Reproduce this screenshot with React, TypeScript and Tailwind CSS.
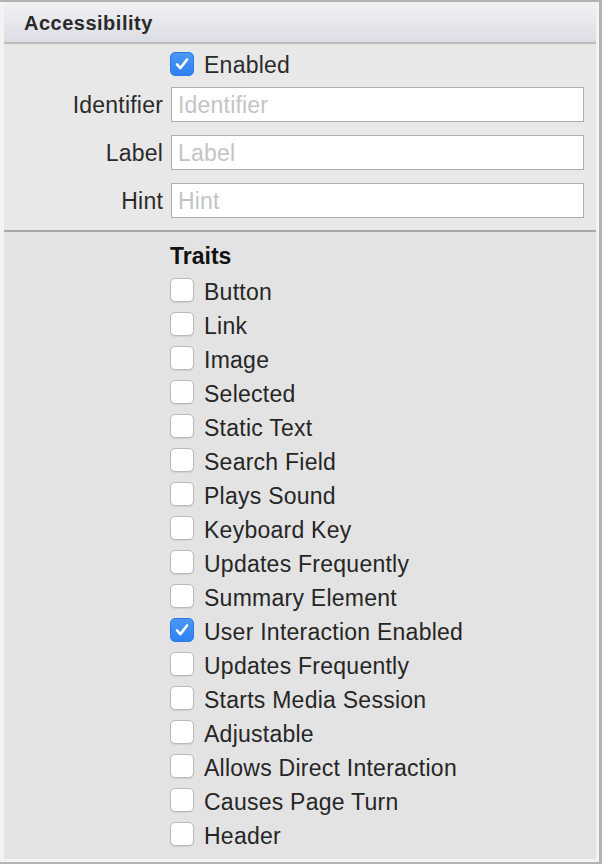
import React from "react";

const font = { fontFamily: '"Liberation Sans", Arial, sans-serif' };

function Box({ checked }: { checked?: boolean }) {
  if (checked) {
    return (
      <div className="w-[24px] h-[24px] rounded-[5px] bg-gradient-to-b from-[#4a98f8] to-[#2f80f2] border border-[#2a78e6] flex items-center justify-center shrink-0">
        <svg width="24" height="24" viewBox="0 0 24 24">
          <path d="M6.5 12.5 L10.2 16.5 L17.5 7" fill="none" stroke="#ffffff" strokeWidth="2.8" strokeLinecap="round" strokeLinejoin="round" />
        </svg>
      </div>
    );
  }
  return (
    <div className="w-[24px] h-[24px] rounded-[5px] bg-white border border-[#b9b9b9] shadow-[0_1px_1px_rgba(0,0,0,0.08)] shrink-0" />
  );
}

const traits: [string, boolean][] = [
  ["Button", false],
  ["Link", false],
  ["Image", false],
  ["Selected", false],
  ["Static Text", false],
  ["Search Field", false],
  ["Plays Sound", false],
  ["Keyboard Key", false],
  ["Updates Frequently", false],
  ["Summary Element", false],
  ["User Interaction Enabled", true],
  ["Updates Frequently", false],
  ["Starts Media Session", false],
  ["Adjustable", false],
  ["Allows Direct Interaction", false],
  ["Causes Page Turn", false],
  ["Header", false],
];

function Field({ label }: { label: string }) {
  return (
    <div className="flex items-center h-[35px]">
      <div className="w-[159px] text-right text-[23px] tracking-[0.2px] text-[#2b2b2b] pt-[2px]">{label}</div>
      <div className="ml-[8px] w-[413px] h-[35px] bg-white border border-[#aeaeae] flex items-center pl-[6px] pt-[2px] text-[23px] tracking-[0.2px] text-[#c4c4c4]">
        {label}
      </div>
    </div>
  );
}

export default function App() {
  return (
    <div style={font} className="w-[602px] h-[864px] bg-[#b3b3b3] pt-[2px] pr-[3px] pb-[2px]">
      <div className="h-full bg-[#f3f3f3] pl-[4px] pr-[3px] pb-[3px] flex flex-col">
        <div className="h-[42px] bg-gradient-to-b from-[#f2f2f4] to-[#dcdee5] border-b-2 border-[#bcbcbc] flex items-center pl-[20px] shrink-0">
          <span className="text-[20px] font-bold tracking-[0.5px] text-[#2a2a2a] pt-[1px]">Accessibility</span>
        </div>
        <div className="bg-[#e8e8e8] pt-[8px] pb-[12px] shrink-0">
          <div className="flex items-center h-[24px] pl-[166px]">
            <Box checked />
            <span className="ml-[10px] text-[23px] tracking-[0.25px] text-[#2b2b2b] pt-[2px]">Enabled</span>
          </div>
          <div className="mt-[11px] flex flex-col gap-[13px]">
            <Field label="Identifier" />
            <Field label="Label" />
            <Field label="Hint" />
          </div>
        </div>
        <div className="h-[2px] bg-[#a6a6a6] shrink-0" />
        <div className="flex-1 bg-[#e3e3e3] pt-[5px] pl-[166px]">
          <div className="h-[34px] flex items-center">
            <span className="text-[23px] font-bold text-[#111111] pt-[4px]">Traits</span>
          </div>
          <div className="mt-[2px] flex flex-col">
            {traits.map(([t, c], i) => (
              <div key={i} className="h-[34px] flex items-center">
                <Box checked={c} />
                <span className="ml-[10px] text-[23px] tracking-[0.25px] text-[#262626] pt-[4px]">{t}</span>
              </div>
            ))}
          </div>
        </div>
      </div>
    </div>
  );
}
